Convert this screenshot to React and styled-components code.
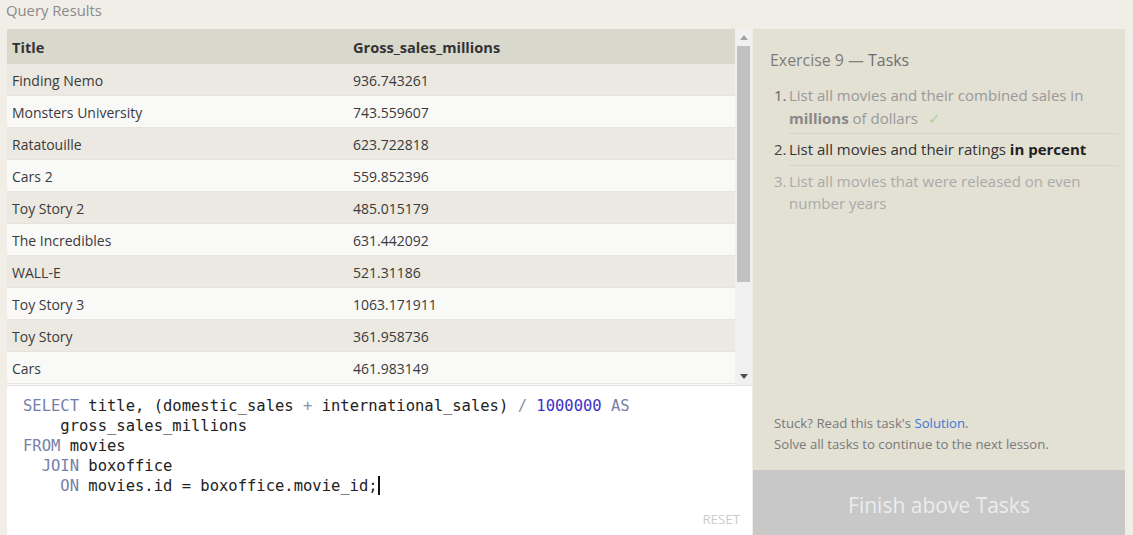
import React from "react";
import styled, { createGlobalStyle } from "styled-components";

const Global = createGlobalStyle`
  html, body { margin: 0; padding: 0; background: #f0eee7; }
  body { font-family: "Open Sans", "Noto Sans", sans-serif; }
`;

const Page = styled.div`
  width: 1133px;
  height: 535px;
  overflow: hidden;
  display: flex;
  flex-direction: column;
  background: #f0eee7;
`;

const PageTitle = styled.div`
  height: 29px;
  padding-left: 6px;
  font-size: 14.8px;
  line-height: 21px;
  color: #8a8a8a;
`;

const Main = styled.div`
  display: flex;
  flex: 1;
  padding-left: 7px;
  padding-right: 8px;
  min-height: 0;
`;

const LeftCol = styled.div`
  width: 745px;
  display: flex;
  flex-direction: column;
`;

const ResultsArea = styled.div`
  height: 357px;
  display: flex;
  background: #f9f9f8;
  border-bottom: 1px solid #e4e2da;
  box-sizing: border-box;
`;

const Table = styled.div`
  flex: 1;
  display: flex;
  flex-direction: column;
  overflow: hidden;
`;

const HeaderRow = styled.div`
  display: grid;
  grid-template-columns: 341px 1fr;
  height: 35px;
  flex: none;
  align-items: center;
  background: #d9d8cd;
  font-weight: 700;
  font-size: 14.6px;
  color: #333;
`;

const Row = styled.div`
  display: grid;
  grid-template-columns: 341px 1fr;
  height: 32px;
  flex: none;
  box-sizing: border-box;
  align-items: center;
  padding-top: 1px;
  font-size: 14px;
  color: #3a3a3a;
  background: ${(p) => (p.$odd ? "#ebe9e1" : "#f9f9f8")};
  border-bottom: 1px solid #e6e4dc;
`;

const Cell = styled.div`
  padding-left: 5px;
  white-space: nowrap;
`;

const Scrollbar = styled.div`
  width: 17px;
  flex: none;
  background: #f0f0f0;
  display: flex;
  flex-direction: column;
  align-items: center;
`;

const Arrow = styled.div`
  height: 17px;
  width: 17px;
  display: flex;
  align-items: center;
  justify-content: center;
  flex: none;
`;

const Thumb = styled.div`
  width: 13px;
  height: 236px;
  background: #c1c1c1;
`;

const Spacer = styled.div`
  flex: 1;
`;

const Editor = styled.div`
  flex: 1;
  background: #ffffff;
  position: relative;
  padding: 10px 0 0 16px;
  font-family: "DejaVu Sans Mono", "Liberation Mono", monospace;
  font-size: 15.5px;
  line-height: 20px;
  color: #222;
`;

const CodeLine = styled.div`
  white-space: pre;
`;

const Kw = styled.span`
  color: #7780a8;
`;
const Op = styled.span`
  color: #8890a8;
`;
const Num = styled.span`
  color: #3d32c8;
`;
const Caret = styled.span`
  display: inline-block;
  width: 2px;
  height: 19px;
  background: #111;
  vertical-align: -4px;
`;

const Reset = styled.div`
  position: absolute;
  right: 12px;
  bottom: 6px;
  font-family: "Open Sans", sans-serif;
  font-size: 13.3px;
  color: #cccccc;
`;

const RightCol = styled.div`
  width: 372px;
  margin-left: 1px;
  display: flex;
  flex-direction: column;
`;

const TaskPanel = styled.div`
  flex: 1;
  background: #e3e0d4;
  padding: 20px 7px 0 17px;
  display: flex;
  flex-direction: column;
`;

const PanelTitle = styled.div`
  font-size: 15.9px;
  line-height: 22px;
  color: #7d7d7d;
  margin-bottom: 13px;
  span { color: #6e6e6e; }
`;

const TaskList = styled.ol`
  margin: 0;
  padding: 0 0 0 4px;
  list-style: none;
`;

const Task = styled.li`
  display: flex;
  font-size: 15px;
  line-height: 22.5px;
  color: ${(p) => (p.$state === "done" ? "#999" : p.$state === "current" ? "#333" : "#aaa")};
  b { color: ${(p) => (p.$state === "done" ? "#888" : "#222")}; }
`;

const TaskNum = styled.span`
  width: 15px;
  flex: none;
  color: ${(p) => p.$color};
`;

const TaskText = styled.div`
  flex: 1;
  padding-bottom: 4px;
  margin-bottom: 4px;
  border-bottom: ${(p) => (p.$sep ? "1px solid #d6d3c7" : "none")};
`;

const Check = styled.span`
  color: #a6d3a0;
  margin-left: 10px;
`;

const Help = styled.div`
  margin-top: auto;
  padding: 0 0 15px 4px;
  font-size: 13.2px;
  line-height: 21px;
  color: #7a7a7a;
  a { color: #3a78d6; text-decoration: none; }
`;

const FinishButton = styled.div`
  height: 65px;
  box-sizing: border-box;
  padding-top: 4px;
  flex: none;
  background: #c8c8c8;
  color: #ececec;
  font-size: 21px;
  display: flex;
  align-items: center;
  justify-content: center;
`;

const rows = [
  ["Finding Nemo", "936.743261"],
  ["Monsters University", "743.559607"],
  ["Ratatouille", "623.722818"],
  ["Cars 2", "559.852396"],
  ["Toy Story 2", "485.015179"],
  ["The Incredibles", "631.442092"],
  ["WALL-E", "521.31186"],
  ["Toy Story 3", "1063.171911"],
  ["Toy Story", "361.958736"],
  ["Cars", "461.983149"],
];

const Tri = ({ up, color }) => (
  <svg width="8" height="5" viewBox="0 0 8 5">
    {up ? <path d="M0 5 L4 0 L8 5 Z" fill={color} /> : <path d="M0 0 L8 0 L4 5 Z" fill={color} />}
  </svg>
);

export default function App() {
  return (
    <Page>
      <Global />
      <PageTitle>Query Results</PageTitle>
      <Main>
        <LeftCol>
          <ResultsArea>
            <Table>
              <HeaderRow>
                <Cell>Title</Cell>
                <Cell>Gross_sales_millions</Cell>
              </HeaderRow>
              {rows.map((r, i) => (
                <Row key={r[0]} $odd={i % 2 === 0}>
                  <Cell>{r[0]}</Cell>
                  <Cell>{r[1]}</Cell>
                </Row>
              ))}
            </Table>
            <Scrollbar>
              <Arrow><Tri up color="#a3a3a3" /></Arrow>
              <Thumb />
              <Spacer />
              <Arrow><Tri color="#505050" /></Arrow>
            </Scrollbar>
          </ResultsArea>
          <Editor>
            <CodeLine><Kw>SELECT</Kw> title, (domestic_sales <Op>+</Op> international_sales) <Op>/</Op> <Num>1000000</Num> <Kw>AS</Kw></CodeLine>
            <CodeLine>{"    "}gross_sales_millions</CodeLine>
            <CodeLine><Kw>FROM</Kw> movies</CodeLine>
            <CodeLine>{"  "}<Kw>JOIN</Kw> boxoffice</CodeLine>
            <CodeLine>{"    "}<Kw>ON</Kw> movies.id = boxoffice.movie_id;<Caret /></CodeLine>
            <Reset>RESET</Reset>
          </Editor>
        </LeftCol>
        <RightCol>
          <TaskPanel>
            <PanelTitle>Exercise 9 — <span>Tasks</span></PanelTitle>
            <TaskList>
              <Task $state="done">
                <TaskNum $color="#666">1.</TaskNum>
                <TaskText $sep>
                  List all movies and their combined sales in <b>millions</b> of dollars<Check>✓</Check>
                </TaskText>
              </Task>
              <Task $state="current">
                <TaskNum $color="#444">2.</TaskNum>
                <TaskText $sep>
                  List all movies and their ratings <b>in percent</b>
                </TaskText>
              </Task>
              <Task $state="todo">
                <TaskNum $color="#aaa">3.</TaskNum>
                <TaskText>List all movies that were released on even number years</TaskText>
              </Task>
            </TaskList>
            <Help>
              Stuck? Read this task's <a href="#">Solution</a>.<br />
              Solve all tasks to continue to the next lesson.
            </Help>
          </TaskPanel>
          <FinishButton>Finish above Tasks</FinishButton>
        </RightCol>
      </Main>
    </Page>
  );
}
